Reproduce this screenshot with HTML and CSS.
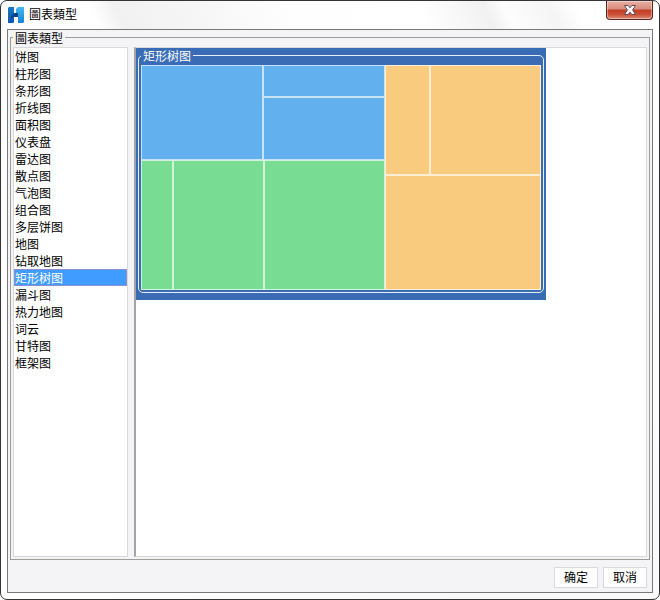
FILE: index.html
```html
<!DOCTYPE html>
<html lang="zh-Hans">
<head>
  <meta charset="UTF-8" />
  <meta name="viewport" content="width=device-width, initial-scale=1.0" />
  <title>圖表類型</title>
  <link rel="stylesheet" href="styles.css">
</head>
<body>
  <div class="window">
    <header class="titlebar" lang="zh-Hant">
      <svg class="logo" width="16" height="16" viewBox="0 0 16 16">
        <defs>
          <linearGradient id="left" x1="0" y1="0" x2="0" y2="1">
            <stop offset="0" stop-color="#1a78c8"/>
            <stop offset="1" stop-color="#0c58b0"/>
          </linearGradient>
          <linearGradient id="right" x1="0" y1="0" x2="0" y2="1">
            <stop offset="0" stop-color="#48b8f0"/>
            <stop offset="1" stop-color="#1484d8"/>
          </linearGradient>
        </defs>
        <path d="M0 1L1 0H6V15L5 16H0Z" fill="url(#left)"/>
        <path d="M3 9L6 6H11V10H6L3 12Z" fill="#0a4488"/>
        <path d="M8 2L10 0H16V15L15 16H10V6H8Z" fill="url(#right)"/>
      </svg>
      <h1>圖表類型</h1>
      <button class="close" type="button" aria-label="关闭">
        <svg width="12" height="10" viewBox="0 0 12 10">
          <path d="M0.5 0.5H4L6 2.8L8 0.5H11.5L8.6 5L11.5 9.5H8L6 7.2L4 9.5H0.5L3.4 5Z" fill="#fff" stroke="#5a4a5a"/>
        </svg>
      </button>
    </header>

    <main class="client">
      <fieldset class="types">
        <legend lang="zh-Hant">圖表類型</legend>
        <select class="type-list" size="19" aria-label="圖表類型">
          <option>饼图</option>
          <option>柱形图</option>
          <option>条形图</option>
          <option>折线图</option>
          <option>面积图</option>
          <option>仪表盘</option>
          <option>雷达图</option>
          <option>散点图</option>
          <option>气泡图</option>
          <option>组合图</option>
          <option>多层饼图</option>
          <option>地图</option>
          <option>钻取地图</option>
          <option selected>矩形树图</option>
          <option>漏斗图</option>
          <option>热力地图</option>
          <option>词云</option>
          <option>甘特图</option>
          <option>框架图</option>
        </select>

        <div class="preview">
          <div class="card">
            <fieldset class="chart">
              <legend>矩形树图</legend>
              <div class="treemap">
                <div class="tiles blue">
                  <i></i><i></i><i></i>
                </div>
                <div class="tiles orange">
                  <i></i><i></i><i></i>
                </div>
                <div class="tiles green">
                  <i></i><i></i><i></i>
                </div>
              </div>
            </fieldset>
          </div>
        </div>
      </fieldset>

      <footer class="actions">
        <button type="button">确定</button>
        <button type="button">取消</button>
      </footer>
    </main>
  </div>
</body>
</html>
```

FILE: styles.css
```css
* {
  box-sizing: border-box;
}

body {
  margin: 0;
  background: #fff;
  color: #000;
  font-family: "Liberation Sans", "Noto Sans CJK SC", sans-serif;
  font-size: 12px;
}

[lang="zh-Hant"] {
  font-family: "Liberation Sans", "Noto Sans CJK TC", sans-serif;
}

button,
select {
  font: inherit;
  color: inherit;
}

.window {
  display: flex;
  flex-direction: column;
  height: 100vh;
  padding: 0 6px 6px;
  border: 1px solid #343438;
  border-radius: 7px;
  background: linear-gradient(60deg, #fff 0%, #f8f8f8 50%, #fff 100%);
}

/* title bar */
.titlebar {
  display: flex;
  align-items: center;
  height: 28px;
  flex: none;
  background: linear-gradient(65deg, #fff 14%, #f1f1f1 18%, #f6f6f6 30%, #fefefe 44%, #fff 64%, #f1f1f1 74%, #fdfdfd 77%, #f5f5f5 84%, #fff 88%);
}

.logo {
  margin: 0 5px 0 1px;
}

h1 {
  margin: 0;
  font-size: 12px;
  font-weight: normal;
  line-height: 16px;
}

.close {
  display: flex;
  justify-content: center;
  align-items: center;
  align-self: flex-start;
  width: 47px;
  height: 19px;
  margin-left: auto;
  padding: 0;
  border: 1px solid #5a2420;
  border-top: 0;
  border-radius: 0 0 4px 4px;
  background: linear-gradient(#e9b0a4 0%, #d98a7b 45%, #c03c25 50%, #cc5138 75%, #e08d78 100%);
  box-shadow: inset 0 0 0 1px rgba(255, 255, 255, 0.4);
}

/* dialog body */
.client {
  display: flex;
  flex-direction: column;
  flex: 1;
  min-height: 0;
  padding: 0 2px;
  border: 1px solid #787878;
  background: #f4f4f6;
}

fieldset {
  min-width: 0;
  margin: 0;
  padding: 2px;
}

legend {
  padding: 3px 2px 0;
  line-height: 12px;
}

.types {
  display: flex;
  flex: 1;
  min-height: 0;
  border: 1px solid #9c9c98;
}

.type-list {
  width: 115px;
  height: 100%;
  padding: 0;
  border: 1px solid #d8d8de;
  border-radius: 0;
  outline: 0;
  background: #fff;
  overflow: hidden;
}

.type-list option {
  height: 17px;
  min-height: 17px;
  padding: 0 1px;
  line-height: 17px;
}

.type-list option:checked {
  background-image: linear-gradient(#409cff, #409cff);
  box-shadow: inset 0 0 0 1px #9090d0;
  -webkit-text-fill-color: #fff;
}

.preview {
  flex: 1;
  margin-left: 6px;
  border: 1px solid #d8d8de;
  border-left: 2px solid #a4a4a4;
  background: #fff;
}

/* chart thumbnail */
.card {
  max-width: 410px;
  padding: 0 2px 7px;
  background: #3a6cb5;
}

.chart {
  border: 1px solid #e8eef8;
  border-radius: 5px;
}

.chart legend {
  color: #fff;
}

.treemap {
  display: grid;
  grid-template-columns: 244fr 156fr;
  grid-template-rows: 95px 130px;
}

.tiles {
  display: grid;
}

.tiles i {
  border: 1px solid rgba(255, 255, 255, 0.65);
}

.blue {
  grid-template-columns: 1fr 1fr;
  grid-template-rows: 32fr 63fr;
  background: #63b0ee;
}

.blue i:first-child {
  grid-row: span 2;
}

.orange {
  grid-row: span 2;
  grid-template-columns: 45fr 111fr;
  grid-template-rows: 110fr 115fr;
  background: #f8cb7f;
}

.orange i:last-child {
  grid-column: span 2;
}

.green {
  grid-row: 2;
  grid-template-columns: 32fr 91fr 121fr;
  background: #78dc92;
}

/* bottom buttons */
.actions {
  display: flex;
  justify-content: flex-end;
  gap: 5px;
  padding: 7px 3px 4px;
}

.actions button {
  width: 44px;
  height: 21px;
  padding: 0;
  border: 1px solid #d8d8de;
  background: #fff;
  line-height: 20px;
}
```
